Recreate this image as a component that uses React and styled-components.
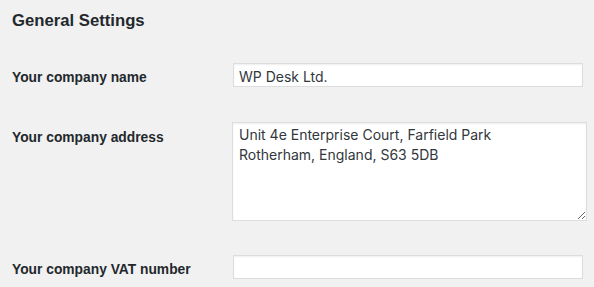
import React from "react";
import styled, { createGlobalStyle } from "styled-components";

const Global = createGlobalStyle`
  html, body { margin: 0; padding: 0; background: #f1f1f1; }
  body { font-family: "Liberation Sans", Arial, Helvetica, sans-serif; color: #23282d; }
`;

const Page = styled.div`
  padding: 10px 0 0 12px;
  display: flex;
  flex-direction: column;
`;

const Title = styled.h2`
  margin: 0 0 31px;
  font-size: 16.7px;
  line-height: 22px;
  font-weight: 700;
  color: #23282d;
`;

const Form = styled.div`
  display: flex;
  flex-direction: column;
  gap: 34px;
`;

const Row = styled.div`
  display: flex;
  align-items: flex-start;
  margin-top: ${(p) => p.$shift || 0}px;
`;

const Label = styled.label`
  width: 221px;
  flex: none;
  padding-top: ${(p) => p.$top || 6}px;
  font-size: 13.8px;
  line-height: 18.2px;
  font-weight: 700;
  color: #23282d;
`;

const fieldFont = `"Inter", "Liberation Sans", Arial, sans-serif`;

const TextInput = styled.input`
  box-sizing: border-box;
  width: 350px;
  height: 24px;
  margin: 0;
  padding: 2px 5px 0;
  border: 1px solid #dddddd;
  background: #fff;
  box-shadow: inset 0 1px 2px rgba(0, 0, 0, 0.07);
  font-family: ${fieldFont};
  font-size: 14px;
  color: #32373c;
  outline: none;
`;

const TextArea = styled.textarea`
  box-sizing: border-box;
  width: 355px;
  height: 99px;
  margin: 0 0 0 -1px;
  padding: 2px 6px;
  border: 1px solid #dddddd;
  background: #fff;
  box-shadow: inset 0 1px 2px rgba(0, 0, 0, 0.07);
  font-family: ${fieldFont};
  font-size: 14px;
  line-height: 20px;
  color: #32373c;
  outline: none;
  resize: both;
`;

export default function App() {
  return (
    <>
      <Global />
      <Page>
        <Title>General Settings</Title>
        <Form>
          <Row>
            <Label $top={6}>Your company name</Label>
            <TextInput defaultValue="WP Desk Ltd." />
          </Row>
          <Row $shift={1}>
            <Label $top={7}>Your company address</Label>
            <TextArea
              defaultValue={"Unit 4e Enterprise Court, Farfield Park\nRotherham, England, S63 5DB"}
            />
          </Row>
          <Row>
            <Label $top={6}>Your company VAT number</Label>
            <TextInput defaultValue="" />
          </Row>
        </Form>
      </Page>
    </>
  );
}
